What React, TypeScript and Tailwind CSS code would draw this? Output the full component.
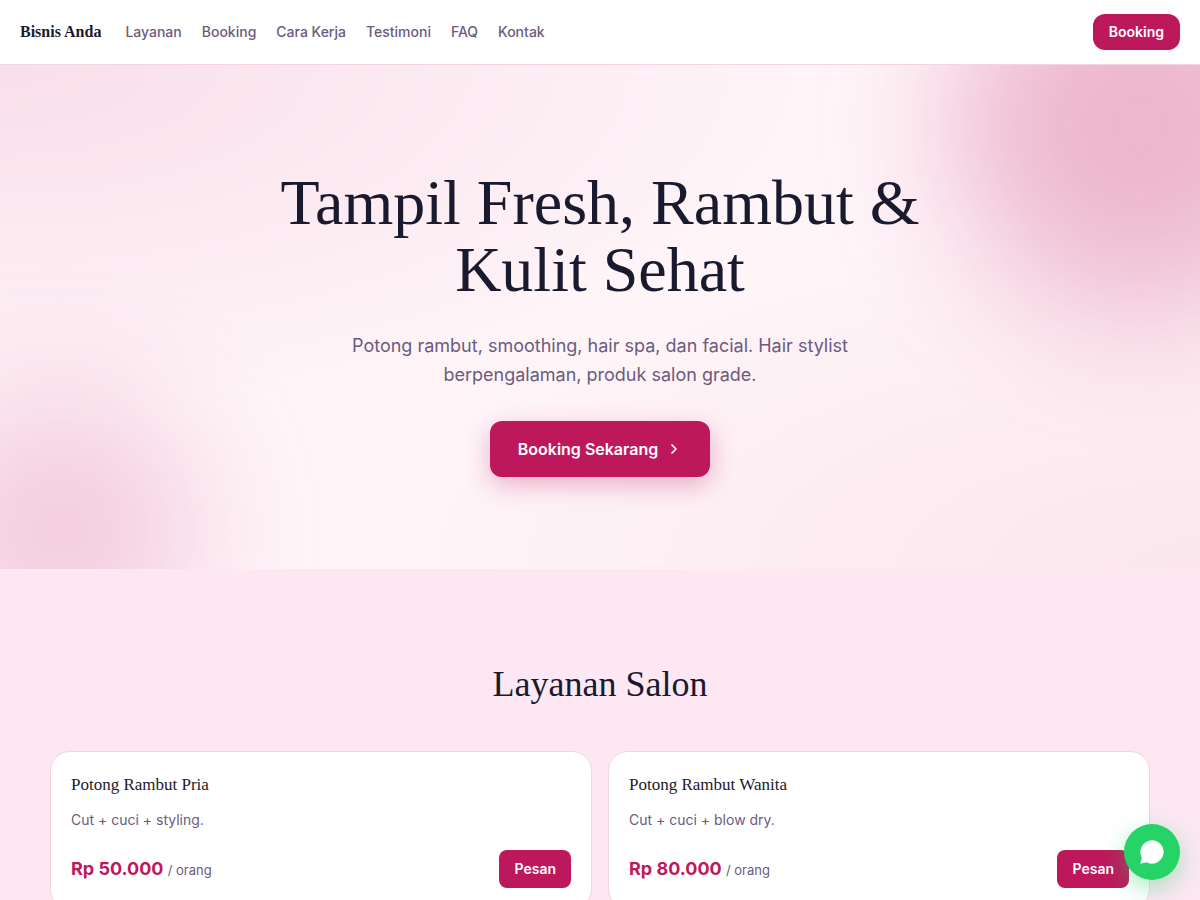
import { ChevronRight } from "lucide-react";

interface Service {
  name: string;
  description: string;
  price: number;
  unit: string;
}

const navLinks = [
  { label: "Layanan", href: "#layanan" },
  { label: "Booking", href: "#booking" },
  { label: "Cara Kerja", href: "#cara-kerja" },
  { label: "Testimoni", href: "#testimoni" },
  { label: "FAQ", href: "#faq" },
  { label: "Kontak", href: "#kontak" },
];

const services: Service[] = [
  {
    name: "Potong Rambut Pria",
    description: "Cut + cuci + styling.",
    price: 50000,
    unit: "orang",
  },
  {
    name: "Potong Rambut Wanita",
    description: "Cut + cuci + blow dry.",
    price: 80000,
    unit: "orang",
  },
];

const formatPrice = (price: number): string =>
  `Rp ${price.toString().replace(/\B(?=(\d{3})+$)/g, ".")}`;

const Navbar = () => (
  <header className="sticky top-0 z-20 bg-white border-b border-[#f6d3e0]">
    <div className="flex h-16 items-center gap-6 px-5">
      <a
        href="#"
        className="font-['Liberation_Serif',serif] text-base font-bold whitespace-nowrap"
      >
        Bisnis Anda
      </a>
      <nav className="flex flex-1 items-center gap-5">
        {navLinks.map((link) => (
          <a
            key={link.href}
            href={link.href}
            className="text-sm font-medium text-[#6b5b7e] hover:text-[#be185d] transition-colors whitespace-nowrap"
          >
            {link.label}
          </a>
        ))}
      </nav>
      <button
        type="button"
        className="h-9 rounded-xl bg-[#be185d] px-4 text-sm font-semibold text-white cursor-pointer"
      >
        Booking
      </button>
    </div>
  </header>
);

const Hero = () => (
  <section className="relative overflow-hidden bg-[#fff5f9] bg-[radial-gradient(ellipse_at_top_left,rgba(190,24,93,0.1),transparent_50%),radial-gradient(ellipse_at_bottom_right,rgba(190,24,70,0.07),transparent_50%)] px-5 pt-26 pb-23 text-center">
    {/* soft glows behind the copy */}
    <div className="absolute -top-[130px] -right-[130px] size-[380px] rounded-full bg-[#be185d] opacity-[0.28] blur-[70px]" />
    <div className="absolute -bottom-[100px] -left-[80px] size-[280px] rounded-full bg-[#be185d] opacity-[0.18] blur-[70px]" />

    <div className="relative mx-auto flex max-w-[720px] flex-col items-center">
      <h1 className="font-['Liberation_Serif',serif] text-[64px] leading-[67px]">
        Tampil Fresh, Rambut &amp; Kulit Sehat
      </h1>
      <p className="mt-7 max-w-[560px] text-lg leading-[29px] text-[#6b5b7e]">
        Potong rambut, smoothing, hair spa, dan facial. Hair stylist
        berpengalaman, produk salon grade.
      </p>
      <button
        type="button"
        className="mt-8 flex h-14 items-center gap-2 rounded-xl bg-[#be185d] px-7 text-base font-semibold text-white shadow-[0_8px_24px_rgba(190,24,93,0.3)] cursor-pointer"
      >
        Booking Sekarang
        <ChevronRight size={16} strokeWidth={2.5} aria-hidden="true" />
      </button>
    </div>
  </section>
);

const ServiceCard = ({ service }: { service: Service }) => (
  <article className="rounded-[20px] border border-[#f6d3e0] bg-white p-5">
    <h3 className="font-['Liberation_Serif',serif] text-[17px] leading-[26px]">
      {service.name}
    </h3>
    <p className="mt-3 text-sm leading-5 text-[#6b5b7e]">
      {service.description}
    </p>
    <div className="mt-5 flex items-center justify-between">
      <p className="text-lg font-bold text-[#be185d]">
        {formatPrice(service.price)}{" "}
        <span className="text-[13px] font-normal text-[#6b5b7e]">
          / {service.unit}
        </span>
      </p>
      <button
        type="button"
        className="h-[38px] rounded-lg bg-[#be185d] px-[15px] text-sm font-semibold text-white cursor-pointer"
      >
        Pesan
      </button>
    </div>
  </article>
);

const Services = () => (
  <section id="layanan" className="px-5 py-24">
    <div className="mx-auto max-w-[1100px]">
      <h2 className="text-center font-['Liberation_Serif',serif] text-4xl leading-[38px]">
        Layanan Salon
      </h2>
      <div className="mt-12 grid grid-cols-1 gap-4 md:grid-cols-2">
        {services.map((service) => (
          <ServiceCard key={service.name} service={service} />
        ))}
      </div>
    </div>
  </section>
);

const ChatButton = () => (
  <a
    href="#kontak"
    aria-label="Chat WhatsApp"
    className="fixed right-5 bottom-5 z-30 flex size-14 items-center justify-center rounded-full bg-[#25d366] text-white shadow-[0_8px_24px_rgba(37,211,102,0.4)]"
  >
    <svg viewBox="0 0 24 24" className="size-7" fill="currentColor">
      <path d="M12 2a10 10 0 0 0-8.700 14.930L2 22l5.200-1.200A10 10 0 1 0 12 2z" />
    </svg>
  </a>
);

const App = () => {
  return (
    <div className="min-h-screen bg-[#fce7f3] font-[Inter,sans-serif] text-[#1a1a2e]">
      <Navbar />
      <main>
        <Hero />
        <Services />
      </main>
      <ChatButton />
    </div>
  );
};

export default App;
